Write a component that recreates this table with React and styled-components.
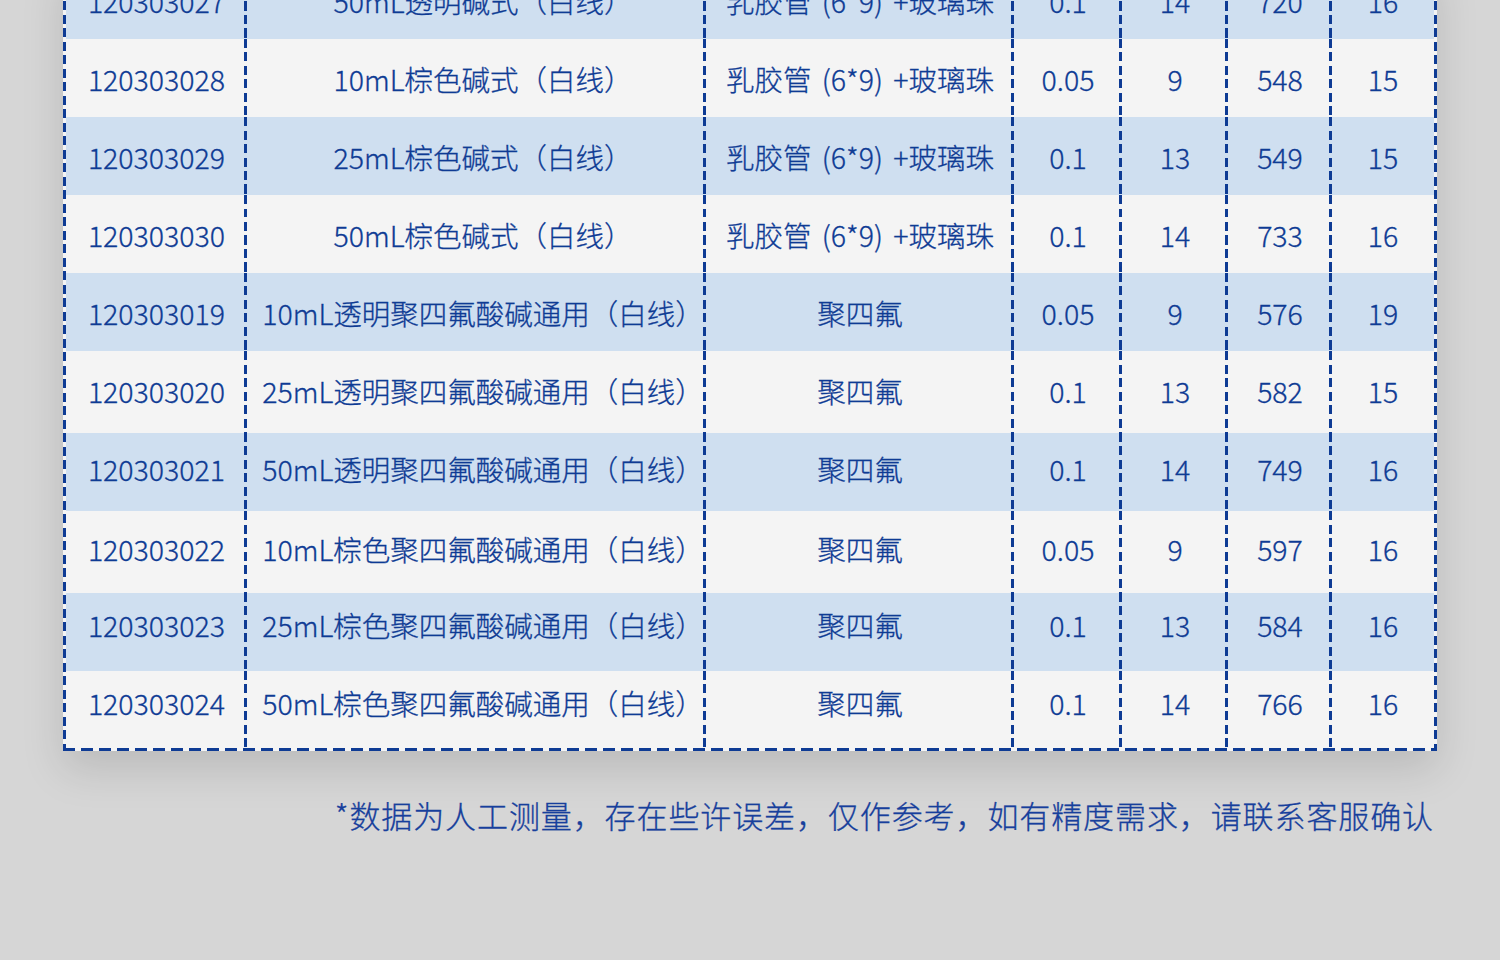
import React from 'react'
import styled, { createGlobalStyle } from 'styled-components'

const ink = '#0e3b94'

const GlobalStyle = createGlobalStyle`
html, body {
  margin: 0;
  padding: 0;
  background: #d6d6d6;
  overflow: hidden;
}
body {
  font-family: "Noto Sans CJK SC", "Noto Sans", sans-serif;
}
`

const Page = styled.div`
width: 1500px;
height: 960px;
display: flex;
flex-direction: column;
align-items: flex-start;
background: #d6d6d6;
`

const vDash = `repeating-linear-gradient(to bottom, ${ink} 0 9px, transparent 9px 13.5px)`
const hDash = `repeating-linear-gradient(to right, ${ink} 0 12px, transparent 12px 18px)`

const Table = styled.div`
margin: -39px 0 0 63px;
width: 1374px;
padding: 0 3px 3px 3px;
box-sizing: border-box;
background:
  ${vDash} left top / 3px 100% no-repeat,
  ${vDash} right top / 3px 100% no-repeat,
  ${hDash} left bottom / 100% 3px no-repeat,
  #f4f4f4;
box-shadow: 0 18px 40px rgba(0, 0, 0, 0.13);
`

const Row = styled.div`
display: grid;
grid-template-columns: 181px 459px 308px 108px 106px 104px 102px;
height: ${p => p.$h}px;
background: ${p => (p.$blue ? '#cfdff0' : '#f4f4f4')};
`

const Cell = styled.div`
display: flex;
align-items: center;
justify-content: center;
white-space: pre;
color: ${ink};
font-size: 28.5px;
font-weight: 300;
-webkit-text-stroke: 0.3px ${ink};
word-spacing: 4px;
padding-bottom: ${p => p.$lift || 0}px;
padding-left: ${p => p.$indent || 0}px;
background: ${p => (p.$last ? 'none' : `${vDash} right top / 3px 100% no-repeat`)};
`

const Note = styled.p`
margin: 42px 0 0 0;
align-self: flex-end;
padding-right: 66px;
color: #173f9c;
font-size: 31px;
font-weight: 300;
-webkit-text-stroke: 0.3px #173f9c;
letter-spacing: 0.9px;
line-height: 43px;
`

const tube = '乳胶管 (6*9) +玻璃珠'

const rows = [
  ['120303027', '50mL透明碱式（白线）', tube, '0.1', '14', '720', '16'],
  ['120303028', '10mL棕色碱式（白线）', tube, '0.05', '9', '548', '15'],
  ['120303029', '25mL棕色碱式（白线）', tube, '0.1', '13', '549', '15'],
  ['120303030', '50mL棕色碱式（白线）', tube, '0.1', '14', '733', '16'],
  ['120303019', '10mL透明聚四氟酸碱通用（白线）', '聚四氟', '0.05', '9', '576', '19'],
  ['120303020', '25mL透明聚四氟酸碱通用（白线）', '聚四氟', '0.1', '13', '582', '15'],
  ['120303021', '50mL透明聚四氟酸碱通用（白线）', '聚四氟', '0.1', '14', '749', '16'],
  ['120303022', '10mL棕色聚四氟酸碱通用（白线）', '聚四氟', '0.05', '9', '597', '16'],
  ['120303023', '25mL棕色聚四氟酸碱通用（白线）', '聚四氟', '0.1', '13', '584', '16'],
  ['120303024', '50mL棕色聚四氟酸碱通用（白线）', '聚四氟', '0.1', '14', '766', '16'],
]

const heights = [78, 78, 78, 78, 78, 82, 78, 82, 78, 77]
const lifts = [0, 0, 0, 0, 0, 4, 8, 8, 16, 15]

export default function App() {
  return (
    <Page>
      <GlobalStyle />
      <Table>
        {rows.map((r, i) => (
          <Row key={r[0]} $blue={i % 2 === 0} $h={heights[i]}>
            {r.map((v, j) => (
              <Cell
                key={j}
                $last={j === r.length - 1}
                $lift={lifts[i]}
                $indent={j === 1 ? 13 : 0}
              >
                {v}
              </Cell>
            ))}
          </Row>
        ))}
      </Table>
      <Note>*数据为人工测量，存在些许误差，仅作参考，如有精度需求，请联系客服确认</Note>
    </Page>
  )
}
